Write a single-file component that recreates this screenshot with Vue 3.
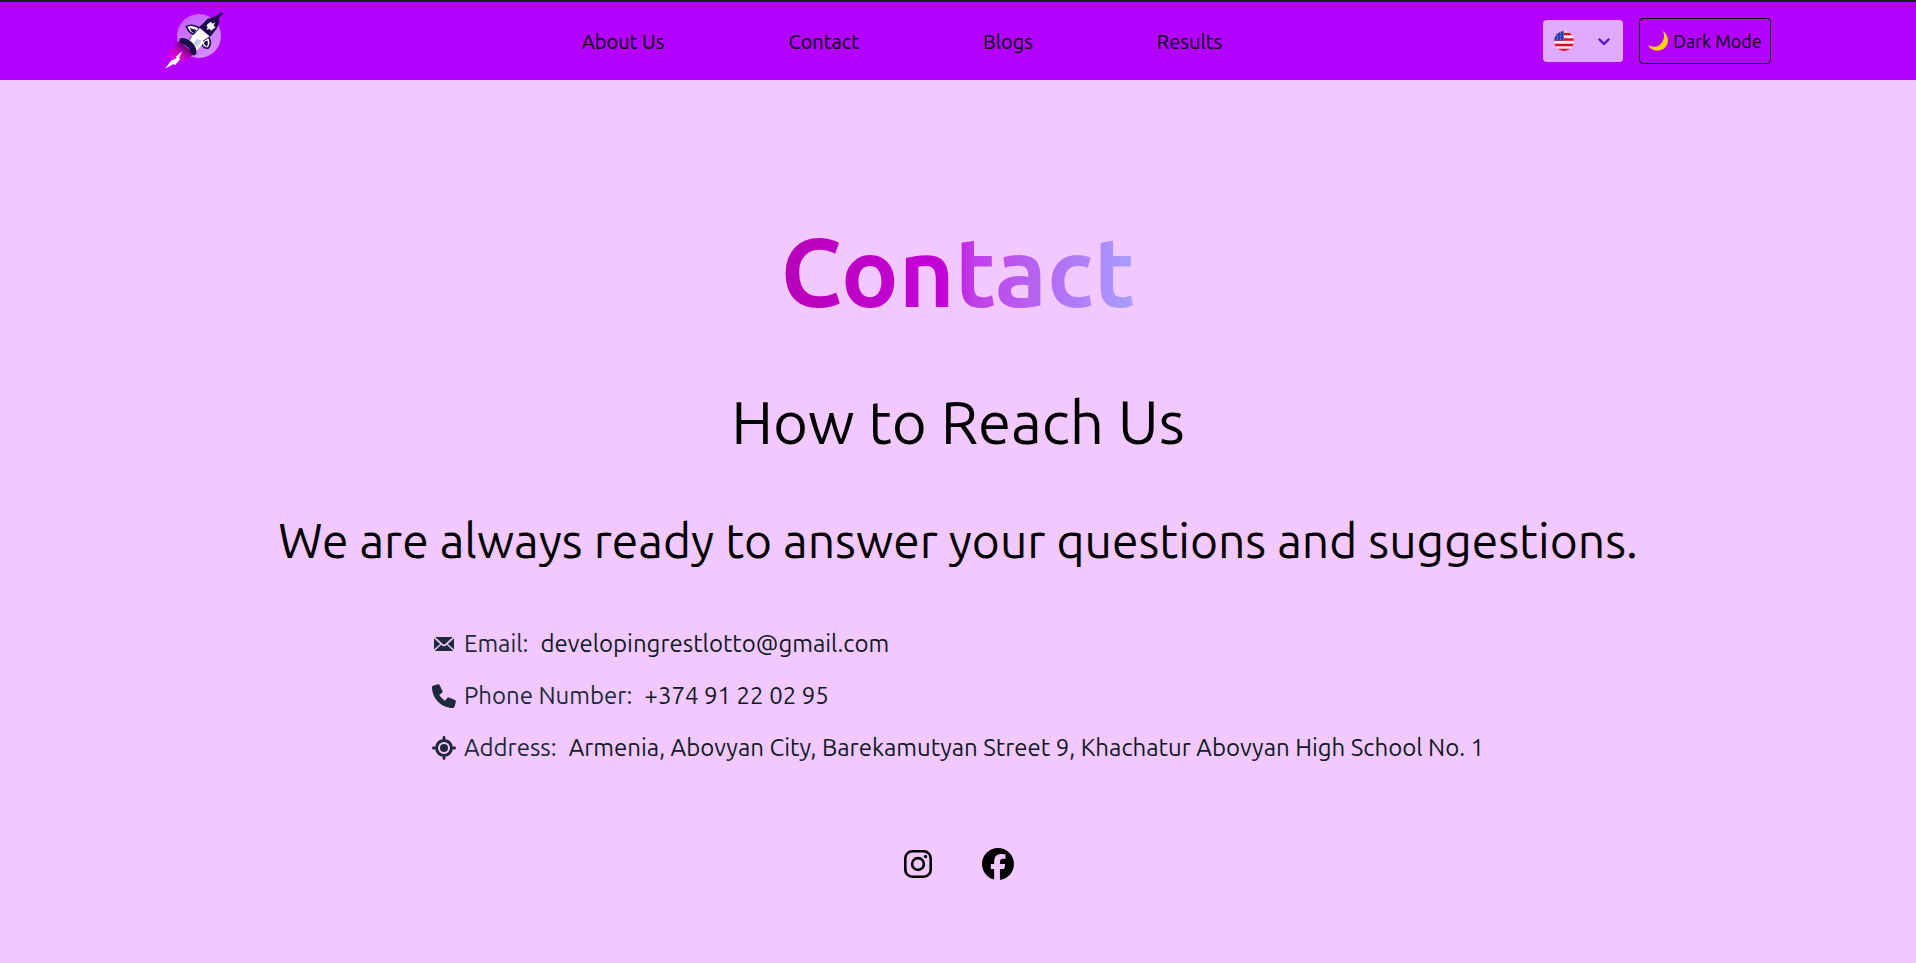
<script setup>
import { ref } from 'vue'

const language = ref('en')
const links = ['About Us', 'Contact', 'Blogs', 'Results']
const stars = [3, 6, 9]
const contacts = [
  {
    label: 'Email:',
    value: 'developingrestlotto@gmail.com',
    icon: 'M3.2 5H20.8L13.2 12.1Q12 13.1 10.8 12.1ZM2 6.3L8.1 11.9L2 17.6ZM22 6.3V17.6L15.9 11.9ZM9.1 12.8L10.2 13.7Q12 15 13.8 13.7L14.9 12.8L21 18.7Q20.8 19 20 19H4Q3.2 19 3 18.7Z'
  },
  {
    label: 'Phone Number:',
    value: '+374 91 22 02 95',
    icon: 'M7.7 1.2a1.5 1.5 0 0 0-1.8-.87l-5 1.37A1.5 1.5 0 0 0 0 3C0 14.6 9.4 24 21 24a1.5 1.5 0 0 0 1.4-1.1l1.4-5a1.5 1.5 0 0 0-.87-1.8l-6-2.5a1.5 1.5 0 0 0-1.75.43l-2.2 2.7A15.8 15.8 0 0 1 7.3 11L10 8.800a1.5 1.5 0 0 0 .43-1.75Z'
  },
  {
    label: 'Address:',
    value: 'Armenia, Abovyan City, Barekamutyan Street 9, Khachatur Abovyan High School No. 1',
    icon: 'M12 0a1.4 1.4 0 0 1 1.4 1.4V3.3A8.8 8.8 0 0 1 20.7 10.6H22.6a1.4 1.4 0 0 1 0 2.8H20.7A8.8 8.8 0 0 1 13.4 20.7V22.6a1.4 1.4 0 0 1-2.8 0V20.7A8.8 8.8 0 0 1 3.3 13.4H1.4a1.4 1.4 0 0 1 0-2.8H3.3A8.8 8.8 0 0 1 10.6 3.3V1.4A1.4 1.4 0 0 1 12 0ZM12 6a6 6 0 1 0 0 12a6 6 0 0 0 0-12ZM12 8a4 4 0 1 1 0 8a4 4 0 0 1 0-8Z'
  }
]
</script>

<template>
  <div class="page">
    <header class="topbar">
      <a class="logo" href="#" aria-label="Home">
        <svg viewBox="0 0 198 198" width="66" height="66">
          <defs>
            <linearGradient id="orb" x1="0" y1="0" x2="0.6" y2="1">
              <stop offset="0" stop-color="#c45cff" />
              <stop offset="1" stop-color="#d48cff" />
            </linearGradient>
            <linearGradient id="flame" x1="1" y1="0.2" x2="0.2" y2="0.9">
              <stop offset="0.1" stop-color="#3c0560" />
              <stop offset="0.55" stop-color="#c800c4" />
              <stop offset="1" stop-color="#e800e0" />
            </linearGradient>
          </defs>
          <circle cx="114" cy="90" r="66" fill="url(#orb)" />
          <path d="M55 106L36 120L46 126L20 134L32 142L12 152L34 156L26 172L50 160L66 170L68 158L80 160L100 142Z" fill="url(#flame)" />
          <path d="M64 136L44 152L48 156L30 164L12 188L38 174L42 178L58 158L54 156Z" fill="#fff" />
          <path d="M183 18Q188 22 182 28L174 35Q176 52 166 70L148 92L114 64L140 38L166 30L172 25Z" fill="#1e0b4d" />
          <path d="M140 54L150 47L154 53L162 49L158 60L164 63L150 74L146 68L137 72L140 62L136 60Z" fill="#fff" />
          <path d="M76 62Q92 52 116 66L106 86Q88 88 76 62Z" fill="#fff" stroke="#1e0b4d" stroke-width="5" />
          <path d="M86 66L106 72L100 82Q92 80 86 66Z" fill="#1e0b4d" />
          <path d="M142 92Q154 112 142 126Q126 130 120 106Z" fill="#fff" stroke="#1e0b4d" stroke-width="5" />
          <path d="M126 106L140 104Q142 114 138 122Q130 118 126 106Z" fill="#1e0b4d" />
          <path d="M116 66L146 92L106 134L78 106Z" fill="#fff" />
          <path d="M114 66L98 86M146 92L126 106M92 92L82 104" fill="none" stroke="#1e0b4d" stroke-width="3" />
          <path d="M108 98L122 104L108 124L98 112Z" fill="#c5cee0" />
          <path d="M56 98Q66 92 84 102Q108 118 107 142Q102 152 92 146Q88 122 60 112Q52 106 56 98Z" fill="#1e0b4d" />
        </svg>
      </a>
      <nav class="nav" aria-label="Main">
        <a v-for="link in links" :key="link" href="#">{{ link }}</a>
      </nav>
      <div class="actions">
        <div class="language">
          <select v-model="language" aria-label="Language">
            <option value="en">English</option>
            <option value="hy">Armenian</option>
          </select>
          <svg class="flag" viewBox="0 0 20 20" width="20" height="20">
            <defs><clipPath id="round"><circle cx="10" cy="10" r="10" /></clipPath></defs>
            <g clip-path="url(#round)">
              <path d="M0 0H20V20H0Z" fill="#f3ecf3" />
              <path d="M0 3H20M0 8.500H20M0 14H20M0 19H20" stroke="#e90027" stroke-width="2.600" />
              <path d="M0 0H10V9.500H0Z" fill="#2b3fae" />
              <path v-for="s in stars" :key="s" :d="`M0 ${s - 1}H10`" fill="none" stroke="#b8c0f0" stroke-width=".8" stroke-dasharray="1 2" />
            </g>
          </svg>
          <svg class="chevron" viewBox="0 0 12 8" width="12" height="8">
            <path d="M1.500 1.500L6 6L10.500 1.500" fill="none" stroke="#5b10c8" stroke-width="2.400" stroke-linecap="round" stroke-linejoin="round" />
          </svg>
        </div>
        <button class="mode" type="button">
          <svg viewBox="0 0 20 20" width="20" height="20" aria-hidden="true">
            <path d="M15 0C21 4 21.500 12 17 16.500C12 21.500 3 20.500 0 14C5 17 11 16 14 11.500C16.500 7.500 16.500 4 15 0Z" fill="#ffd500" />
          </svg>
          Dark Mode
        </button>
      </div>
    </header>

    <main class="content">
      <h1>Contact</h1>
      <h2>How to Reach Us</h2>
      <p class="lead">We are always ready to answer your questions and suggestions.</p>
      <ul class="contacts">
        <li v-for="item in contacts" :key="item.label">
          <svg viewBox="0 0 24 24" width="24" height="24" aria-hidden="true">
            <path :d="item.icon" fill="#1e293b" fill-rule="evenodd" />
          </svg>
          <span class="label">{{ item.label }}</span>
          <span class="value">{{ item.value }}</span>
        </li>
      </ul>
      <div class="social">
        <a href="#" aria-label="Instagram">
          <svg viewBox="0 0 32 32" width="32" height="32">
            <rect x="3.300" y="3.300" width="25.400" height="25.400" rx="7" fill="none" stroke="#000" stroke-width="2.600" />
            <circle cx="16" cy="16" r="5.900" fill="none" stroke="#000" stroke-width="2.600" />
            <circle cx="23.500" cy="8.500" r="1.700" />
          </svg>
        </a>
        <a href="#" aria-label="Facebook">
          <svg viewBox="0 0 512 512" width="32" height="32">
            <path d="M512 256C512 114.600 397.400 0 256 0S0 114.600 0 256C0 376 82.700 476.800 194.200 504.500V334.200H141.400V256h52.800V222.300c0-87.100 39.400-127.500 125-127.500c16.200 0 44.200 3.200 55.700 6.400V172c-6-.6-16.500-1-29.600-1c-42 0-58.200 15.900-58.200 57.200V256h83.600l-14.400 78.200H287V510.100C413.800 494.800 512 386.900 512 256Z" />
          </svg>
        </a>
      </div>
    </main>
  </div>
</template>

<style>
body {
  background: #f1c9fe;
}
</style>

<style scoped>
.page {
  min-height: 100vh;
  background: #f1c9fe;
  color: #000;
  font-family: Ubuntu, "Open Sans", sans-serif;
  font-weight: 400;
}
a {
  color: inherit;
  text-decoration: none;
}
svg {
  display: block;
}
.topbar {
  display: flex;
  align-items: center;
  justify-content: space-between;
  box-sizing: border-box;
  height: 80px;
  padding: 0 145px;
  border-top: 2px solid #1c1c1c;
  background: #b400ff;
}
.logo {
  width: 100px;
  padding: 0 0 4px 16px;
}
.nav {
  display: flex;
  gap: 124px;
  font-size: 20px;
}
.actions {
  display: flex;
  align-items: center;
  gap: 16px;
}
.language {
  position: relative;
}
.language select {
  display: block;
  appearance: none;
  width: 80px;
  height: 42px;
  border: 0;
  border-radius: 4px;
  background: #e0aaff;
  color: transparent;
}
.language option {
  color: #000;
}
.flag,
.chevron {
  position: absolute;
  pointer-events: none;
}
.flag {
  top: 11px;
  left: 11px;
}
.chevron {
  top: 18px;
  right: 13px;
}
.mode {
  display: flex;
  align-items: center;
  justify-content: center;
  gap: 5px;
  width: 132px;
  height: 46px;
  padding: 0;
  border: 1px solid #000;
  border-radius: 4px;
  background: transparent;
  color: #000;
  font: inherit;
  font-size: 18px;
  white-space: nowrap;
}
.content {
  display: flex;
  flex-direction: column;
  align-items: center;
  padding: 144px 24px 80px;
}
h1,
h2,
.lead,
.contacts {
  margin: 0;
}
h1 {
  background: linear-gradient(to right, #b800b8, #c400d8 45%, #c040e8 55%, #a8a0ff);
  background-clip: text;
  color: transparent;
  font-size: 96px;
  font-weight: 700;
  line-height: 96px;
}
h2 {
  margin-top: 72px;
  font-size: 60px;
  font-weight: 400;
  line-height: 60px;
}
.lead {
  margin-top: 64px;
  font-size: 48px;
  line-height: 48px;
  text-align: center;
}
.contacts {
  display: flex;
  flex-direction: column;
  gap: 16px;
  margin-top: 62px;
  padding: 0;
  list-style: none;
  font-size: 24px;
  line-height: 36px;
}
.contacts li {
  display: flex;
  align-items: center;
  gap: 8px;
}
.label {
  margin-right: 4px;
  color: #1e293b;
}
.value {
  color: #111827;
}
.social {
  display: flex;
  gap: 48px;
  margin-top: 82px;
}
</style>
